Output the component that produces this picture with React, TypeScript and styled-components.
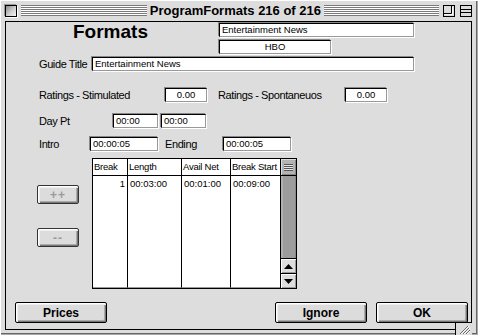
import React from 'react';
import styled, { createGlobalStyle } from 'styled-components';

const Global = createGlobalStyle`
  html, body { margin: 0; padding: 0; background: #dddddd; }
  body { font-family: "Liberation Sans", Arial, sans-serif; color: #000; }
`;

const Window = styled.div`
  position: relative;
  width: 478px;
  height: 335px;
  box-sizing: border-box;
  background: #dddddd;
  padding: 0 6px 5px 5px;
  display: flex;
  flex-direction: column;
  box-shadow: inset 1px 1px 0 #fff, inset -1px -1px 0 #aaa, inset -2px -2px 0 #666;
`;

const TitleBar = styled.div`
  height: 21px;
  display: flex;
  align-items: center;
  flex: none;
`;

const CloseBox = styled.div`
  width: 12px;
  height: 12px;
  box-sizing: border-box;
  border: 1px solid #000;
  background: linear-gradient(135deg, #8a8a8a 0%, #cfcfcf 55%, #f4f4f4 100%);
  box-shadow: 1px 1px 0 #fff, -1px -1px 0 #999;
`;

const Stripes = styled.div<{ $w?: number }>`
  height: 11px;
  ${(p) => (p.$w ? `width: ${p.$w}px; flex: none;` : 'flex: 1;')}
  background: repeating-linear-gradient(to bottom, #7a7a7a 0 1px, #ffffff 1px 2px);
`;

const Title = styled.div`
  font-weight: bold;
  font-size: 13px;
  padding: 0 3px;
  white-space: nowrap;
  line-height: 21px;
`;

const WidgetBox = styled.div<{ $ml: number }>`
  width: 12px;
  height: 12px;
  margin-left: ${(p) => p.$ml}px;
  flex: none;
  display: flex;
  svg { display: block; }
`;

const Content = styled.div`
  flex: 1;
  border: 1px solid #000;
  background: #dddddd;
  display: flex;
  flex-direction: column;
  min-height: 0;
`;

const Header = styled.div`
  display: flex;
  padding: 1px 0 0 67px;
`;

const BigTitle = styled.div`
  width: 146px;
  font-weight: bold;
  font-size: 19px;
  line-height: 19px;
  margin-top: -1px;
`;

const FieldStack = styled.div`
  display: flex;
  flex-direction: column;
  gap: 3px;
`;

const Field = styled.div<{ $w: number; $align?: string }>`
  width: ${(p) => p.$w}px;
  height: 14px;
  box-sizing: border-box;
  flex: none;
  background: #fff;
  border-style: solid;
  border-width: 1px;
  border-color: #000 #999 #999 #000;
  box-shadow: -1px -1px 0 #888, 1px 1px 0 #fff;
  font-size: 9.5px;
  line-height: 12px;
  padding: 0 2px;
  text-align: ${(p) => p.$align || 'left'};
  white-space: nowrap;
  overflow: hidden;
`;

const Row = styled.div<{ $mt: number }>`
  display: flex;
  align-items: center;
  margin-top: ${(p) => p.$mt}px;
  padding-left: 33px;
`;

const Label = styled.div<{ $w: number; $pl?: number }>`
  width: ${(p) => p.$w}px;
  padding-left: ${(p) => p.$pl || 0}px;
  box-sizing: border-box;
  flex: none;
  font-size: 11px;
  letter-spacing: -0.4px;
  white-space: nowrap;
`;

const Gap = styled.div<{ $w: number }>`
  width: ${(p) => p.$w}px;
  flex: none;
`;

const TableSection = styled.div`
  display: flex;
  margin-top: 7px;
  padding-left: 31px;
`;

const SideButtons = styled.div`
  width: 42px;
  display: flex;
  flex-direction: column;
  padding-top: 27px;
  gap: 24px;
`;

const MacButton = styled.div<{ $w: number; $h: number; $disabled?: boolean }>`
  width: ${(p) => p.$w}px;
  height: ${(p) => p.$h}px;
  box-sizing: border-box;
  flex: none;
  border: 1px solid ${(p) => (p.$disabled ? '#333' : '#000')};
  border-radius: 2px;
  background: #dcdcdc;
  box-shadow: inset 1px 1px 0 #fff, inset 2px 2px 0 #eee, inset -1px -1px 0 #777, inset -2px -2px 0 #aaa;
  display: flex;
  align-items: center;
  justify-content: center;
  font-weight: bold;
  font-size: 12px;
  letter-spacing: ${(p) => (p.$disabled ? '1px' : '0')};
  color: ${(p) => (p.$disabled ? '#9a9a9a' : '#000')};
`;

const Table = styled.div`
  margin-left: 13px;
  width: 205px;
  height: 131px;
  box-sizing: border-box;
  border: 1px solid #000;
  display: grid;
  grid-template-columns: 34px 54px 49px 50px 16px;
  background: #fff;
`;

const Column = styled.div<{ $first?: boolean }>`
  display: flex;
  flex-direction: column;
  border-left: ${(p) => (p.$first ? 'none' : '1px solid #000')};
  border-bottom: 1px solid #999;
  min-width: 0;
`;

const HeadCell = styled.div`
  height: 17px;
  box-sizing: border-box;
  border-bottom: 1px solid #000;
  font-size: 9.5px;
  letter-spacing: -0.25px;
  line-height: 15px;
  padding-left: 1px;
  white-space: nowrap;
  overflow: hidden;
`;

const DataCell = styled.div<{ $right?: boolean }>`
  font-size: 9.5px;
  line-height: 15px;
  padding: 0 2px;
  text-align: ${(p) => (p.$right ? 'right' : 'left')};
  white-space: nowrap;
`;

const ScrollCol = styled.div`
  border-left: 1px solid #000;
  display: flex;
  flex-direction: column;
  background: #999;
`;

const ScrollTop = styled.div`
  height: 17px;
  box-sizing: border-box;
  border-bottom: 1px solid #000;
  background: #b4b4b4;
  box-shadow: inset 1px 1px 0 #ddd, inset -1px -1px 0 #888;
  display: flex;
  align-items: center;
  justify-content: center;
`;

const Track = styled.div`
  flex: 1;
  background: #9c9c9c;
  box-shadow: inset 2px 0 0 #b0b0b0, inset -1px 0 0 #888;
`;

const Arrow = styled.div`
  height: 15px;
  box-sizing: border-box;
  border-top: 1px solid #000;
  background: #dddddd;
  box-shadow: inset 1px 1px 0 #fff, inset -1px -1px 0 #999;
  display: flex;
  align-items: center;
  justify-content: center;
`;

const BottomBar = styled.div`
  display: flex;
  margin-top: 13px;
  padding: 0 3px 0 9px;
`;

const Spacer = styled.div`
  flex: 1;
`;

const GrowBox = styled.div`
  position: absolute;
  left: 455px;
  top: 322px;
  width: 17px;
  height: 13px;
  box-sizing: border-box;
  border-top: 1px solid #000;
  border-left: 1px solid #000;
  background: #dddddd;
  svg { display: block; }
`;

const columns = [
  { head: 'Break', value: '1', right: true },
  { head: 'Length', value: '00:03:00' },
  { head: 'Avail Net', value: '00:01:00' },
  { head: 'Break Start', value: '00:09:00' },
];

export default function App() {
  return (
    <>
      <Global />
      <Window>
        <TitleBar>
          <CloseBox />
          <Gap $w={4} />
          <Stripes />
          <Title>ProgramFormats 216 of 216</Title>
          <Stripes $w={115} />
          <WidgetBox $ml={4}>
            <svg width="12" height="12" viewBox="0 0 12 12">
              <rect x="0.5" y="0.5" width="11" height="11" fill="#ddd" stroke="#000" />
              <path d="M8.5 1 V8.5 H1" fill="none" stroke="#000" />
              <path d="M9.5 2 V9.5 H2" fill="none" stroke="#fff" />
            </svg>
          </WidgetBox>
          <WidgetBox $ml={5}>
            <svg width="12" height="12" viewBox="0 0 12 12">
              <rect x="0.5" y="0.5" width="11" height="11" fill="#ddd" stroke="#000" />
              <path d="M1 4.5 H11 M1 7.5 H11" fill="none" stroke="#000" />
            </svg>
          </WidgetBox>
        </TitleBar>
        <Content>
          <Header>
            <BigTitle>Formats</BigTitle>
            <FieldStack>
              <Field $w={195}>Entertainment News</Field>
              <Field $w={112} $align="center">HBO</Field>
            </FieldStack>
          </Header>
          <Row $mt={3}>
            <Label $w={53}>Guide Title</Label>
            <Field $w={322}>Entertainment News</Field>
          </Row>
          <Row $mt={17}>
            <Label $w={126}>Ratings - Stimulated</Label>
            <Field $w={42} $align="center">0.00</Field>
            <Label $w={138} $pl={11}>Ratings - Spontaneuos</Label>
            <Field $w={42} $align="center">0.00</Field>
          </Row>
          <Row $mt={12}>
            <Label $w={74}>Day Pt</Label>
            <Field $w={45}>00:00</Field>
            <Gap $w={3} />
            <Field $w={45}>00:00</Field>
          </Row>
          <Row $mt={9}>
            <Label $w={51}>Intro</Label>
            <Field $w={68}>00:00:05</Field>
            <Label $w={65} $pl={7}>Ending</Label>
            <Field $w={68}>00:00:05</Field>
          </Row>
          <TableSection>
            <SideButtons>
              <MacButton $w={42} $h={19} $disabled>++</MacButton>
              <MacButton $w={42} $h={19} $disabled>--</MacButton>
            </SideButtons>
            <Table>
              {columns.map((c, i) => (
                <Column key={c.head} $first={i === 0}>
                  <HeadCell>{c.head}</HeadCell>
                  <DataCell $right={c.right}>{c.value}</DataCell>
                </Column>
              ))}
              <ScrollCol>
                <ScrollTop>
                  <svg width="9" height="9" viewBox="0 0 9 9">
                    <path d="M0 1.5 H9 M0 3.5 H9 M0 5.5 H9 M0 7.5 H9" stroke="#555" />
                    <path d="M0 2.5 H9 M0 4.5 H9 M0 6.5 H9" stroke="#e6e6e6" />
                  </svg>
                </ScrollTop>
                <Track />
                <Arrow>
                  <svg width="9" height="5" viewBox="0 0 9 5">
                    <path d="M4.5 0 L9 5 H0 Z" fill="#000" />
                  </svg>
                </Arrow>
                <Arrow>
                  <svg width="9" height="5" viewBox="0 0 9 5">
                    <path d="M0 0 H9 L4.5 5 Z" fill="#000" />
                  </svg>
                </Arrow>
              </ScrollCol>
            </Table>
          </TableSection>
          <BottomBar>
            <MacButton $w={92} $h={21}>Prices</MacButton>
            <Spacer />
            <MacButton $w={92} $h={21}>Ignore</MacButton>
            <Gap $w={9} />
            <MacButton $w={92} $h={21}>OK</MacButton>
          </BottomBar>
        </Content>
        <GrowBox>
          <svg width="16" height="12" viewBox="0 0 16 12">
            <path d="M4 11 L12 3 M7 11 L13 5 M10 11 L14 7" stroke="#666" />
            <path d="M5 11 L13 3 M8 11 L14 5 M11 11 L14 8" stroke="#fff" />
          </svg>
        </GrowBox>
      </Window>
    </>
  );
}
